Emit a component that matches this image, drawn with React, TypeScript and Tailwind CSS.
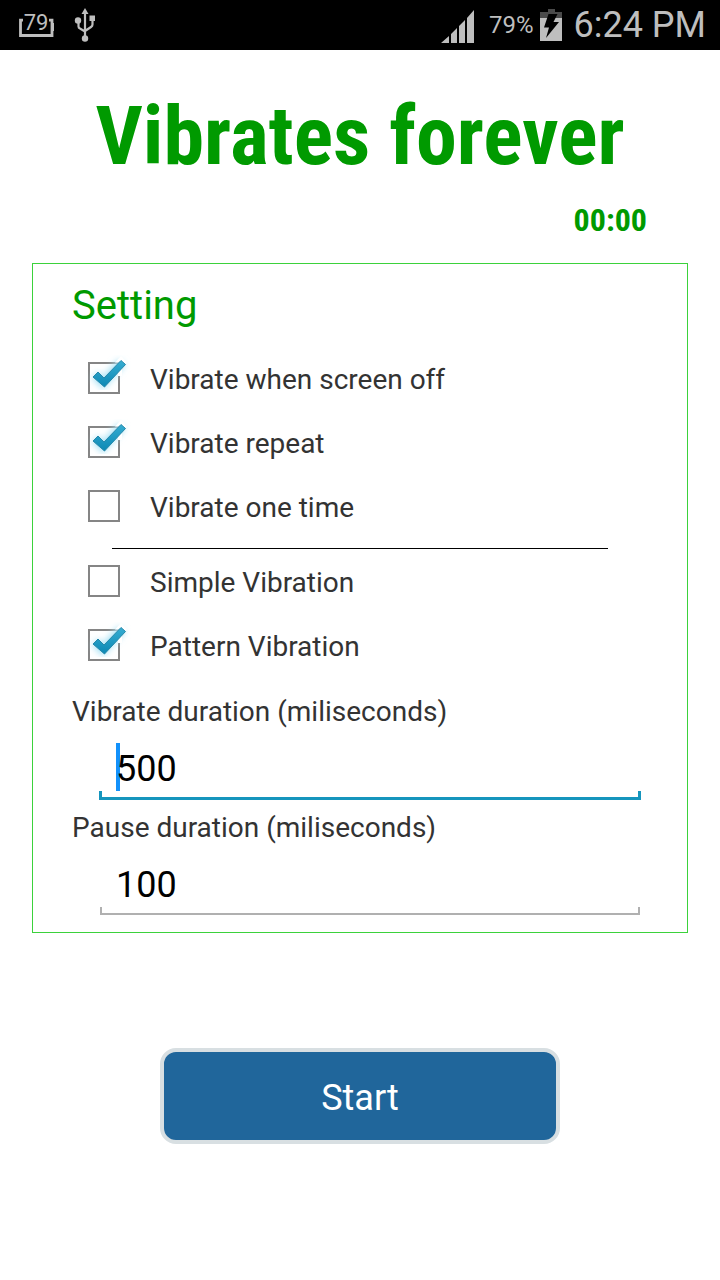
import { useState } from "react";

function StatusBar() {
  return (
    <header className="flex h-[50px] items-center justify-between bg-black pl-[18px] pr-[14px] text-[#bebebe]">
      <div className="flex items-center gap-5">
        <div className="relative h-8 w-9">
          <svg viewBox="0 0 36 32" className="h-8 w-9" fill="none" stroke="currentColor" aria-hidden="true">
            <path d="M5 11.200H2.500V26.500H34V11.200H31" strokeWidth="2.800" />
            <path d="M35.500 14V22" strokeWidth="3" />
          </svg>
          <span className="absolute inset-x-0 top-0 text-center text-[22px] leading-[28px]">79</span>
        </div>
        <svg viewBox="0 0 22 34" className="h-[34px] w-[22px]" aria-label="USB connected">
          <path d="M11 5V30M4.500 13v5.500q0 1.500 1.500 2l5 3M18.500 10v6.500q0 1.500-1.500 2.500l-6 4" fill="none" stroke="currentColor" strokeWidth="2.200" />
          <path d="M11 0l3.500 6h-7z" fill="currentColor" />
          <circle cx="4" cy="12.500" r="3.200" fill="currentColor" />
          <rect x="15.500" y="7.500" width="5.500" height="5.500" fill="currentColor" />
          <circle cx="11" cy="30.500" r="3.200" fill="currentColor" />
        </svg>
      </div>
      <div className="flex items-center">
        <svg viewBox="0 0 34 34" className="mr-[14px] mt-1 h-[34px] w-[34px]" fill="currentColor" aria-label="Signal">
          <path d="M0 33L8 26V33zM10 24L16 18V33H10zM18 16L24 10V33H18zM26 8L33 0V33H26z" />
        </svg>
        <span className="mr-[6px] text-2xl leading-[52px]">79%</span>
        <svg viewBox="0 0 22 32" className="mr-3 h-8 w-[22px]" aria-label="Charging">
          <path d="M8 0h7v3h7v6H0V3h8z" fill="#4a4a4a" />
          <path d="M0 9h22v23H0z" fill="currentColor" />
          <path d="M8.500 5h9l-4 8h5.500L6 29l3-10.500H4z" fill="#000" />
        </svg>
        <span className="text-4xl leading-[50px]">6:24 PM</span>
      </div>
    </header>
  );
}

function CheckRow({ label, checked, onToggle }: { label: string; checked: boolean; onToggle: () => void }) {
  return (
    <label className="flex h-16 items-center gap-[30px] pl-[15px] text-[28px] text-[#333]">
      <span className="relative flex size-8 shrink-0">
        <input
          type="checkbox"
          checked={checked}
          onChange={onToggle}
          className="size-8 appearance-none border-2 border-[#858585] bg-white"
        />
        {checked && (
          <svg viewBox="0 0 48 48" className="pointer-events-none absolute -left-1 -top-2 size-12" aria-hidden="true">
            <defs>
              <linearGradient id="tick" x1="0" y1="0" x2="0" y2="1">
                <stop offset="0" stopColor="#35add2" />
                <stop offset="1" stopColor="#0c88b4" />
              </linearGradient>
              <filter id="glow" x="-30%" y="-30%" width="160%" height="160%">
                <feGaussianBlur stdDeviation="3" />
              </filter>
            </defs>
            <path d="M11 21L19 29L38 8" fill="none" stroke="#a9e2f5" strokeWidth="9" filter="url(#glow)" />
            <path d="M31 8.500L37 2L43 8L34 17.500V22H38V8.500z" fill="#fff" />
            <path d="M9 23L14 18L20 24L37 6.500L41.500 10.500L20.500 33z" fill="url(#tick)" stroke="#2588aa" strokeWidth="1" />
          </svg>
        )}
      </span>
      <span className="pt-[3px]">{label}</span>
    </label>
  );
}

function DurationField({ id, label, initial, active = false }: { id: string; label: string; initial: string; active?: boolean }) {
  return (
    <div>
      <label htmlFor={id} className="block pl-[39px] text-[28px] leading-[56px] text-[#333]">
        {label}
      </label>
      <div className="relative ml-[67px] mr-[47px] mt-[3px]">
        {active && <span className="absolute left-4 top-0 h-12 w-1 bg-[#1291fb]" />}
        <input
          id={id}
          inputMode="numeric"
          defaultValue={initial}
          className="relative block h-12 w-full bg-transparent px-4 pt-1 text-4xl text-black caret-[#1291fb] outline-none"
        />
        <div className={active ? "-mx-px h-[9px] border-x-[3px] border-b-[3px] border-[#1595bd]" : "h-2 border-x-2 border-b-2 border-[#b0b0b0]"} />
      </div>
    </div>
  );
}

export default function App() {
  const [screenOff, setScreenOff] = useState(true);
  const [repeat, setRepeat] = useState(true);
  const [pattern, setPattern] = useState(true);

  return (
    <div className="min-h-screen bg-white font-['Roboto',sans-serif]">
      <StatusBar />
      <main className="px-8 pb-16">
        <h1 className="pt-9 text-center font-['Roboto_Condensed','Lato',sans-serif] text-[82px] font-bold leading-[100px] text-[#009a00]">
          Vibrates forever
        </h1>
        <p className="pr-[41px] pt-3 text-right font-['Roboto_Condensed','Lato',sans-serif] text-[32px] font-bold leading-[44px] text-[#009a00]">
          00:00
        </p>
        <section className="mt-[21px] border border-[#3bd23b] pb-[17px]">
          <h2 className="pl-[39px] pt-px text-[40px] leading-[81px] text-[#009a00]">Setting</h2>
          <div className="pl-10">
            <CheckRow label="Vibrate when screen off" checked={screenOff} onToggle={() => setScreenOff(!screenOff)} />
            <CheckRow label="Vibrate repeat" checked={repeat} onToggle={() => setRepeat(!repeat)} />
            <CheckRow label="Vibrate one time" checked={!repeat} onToggle={() => setRepeat(!repeat)} />
          </div>
          <hr className="mx-[79px] mt-[10px] border-t border-black" />
          <div className="pl-10">
            <CheckRow label="Simple Vibration" checked={!pattern} onToggle={() => setPattern(!pattern)} />
            <CheckRow label="Pattern Vibration" checked={pattern} onToggle={() => setPattern(!pattern)} />
          </div>
          <div className="pt-[7px]">
            <DurationField id="vibrate" label="Vibrate duration (miliseconds)" initial="500" active />
            <DurationField id="pause" label="Pause duration (miliseconds)" initial="100" />
          </div>
        </section>
        <div className="flex justify-center pt-[115px]">
          <button type="button" className="h-24 w-[400px] rounded-2xl border-4 border-[#d8dfe2] bg-[#20669b] pt-1 text-4xl text-white">
            Start
          </button>
        </div>
      </main>
    </div>
  );
}
